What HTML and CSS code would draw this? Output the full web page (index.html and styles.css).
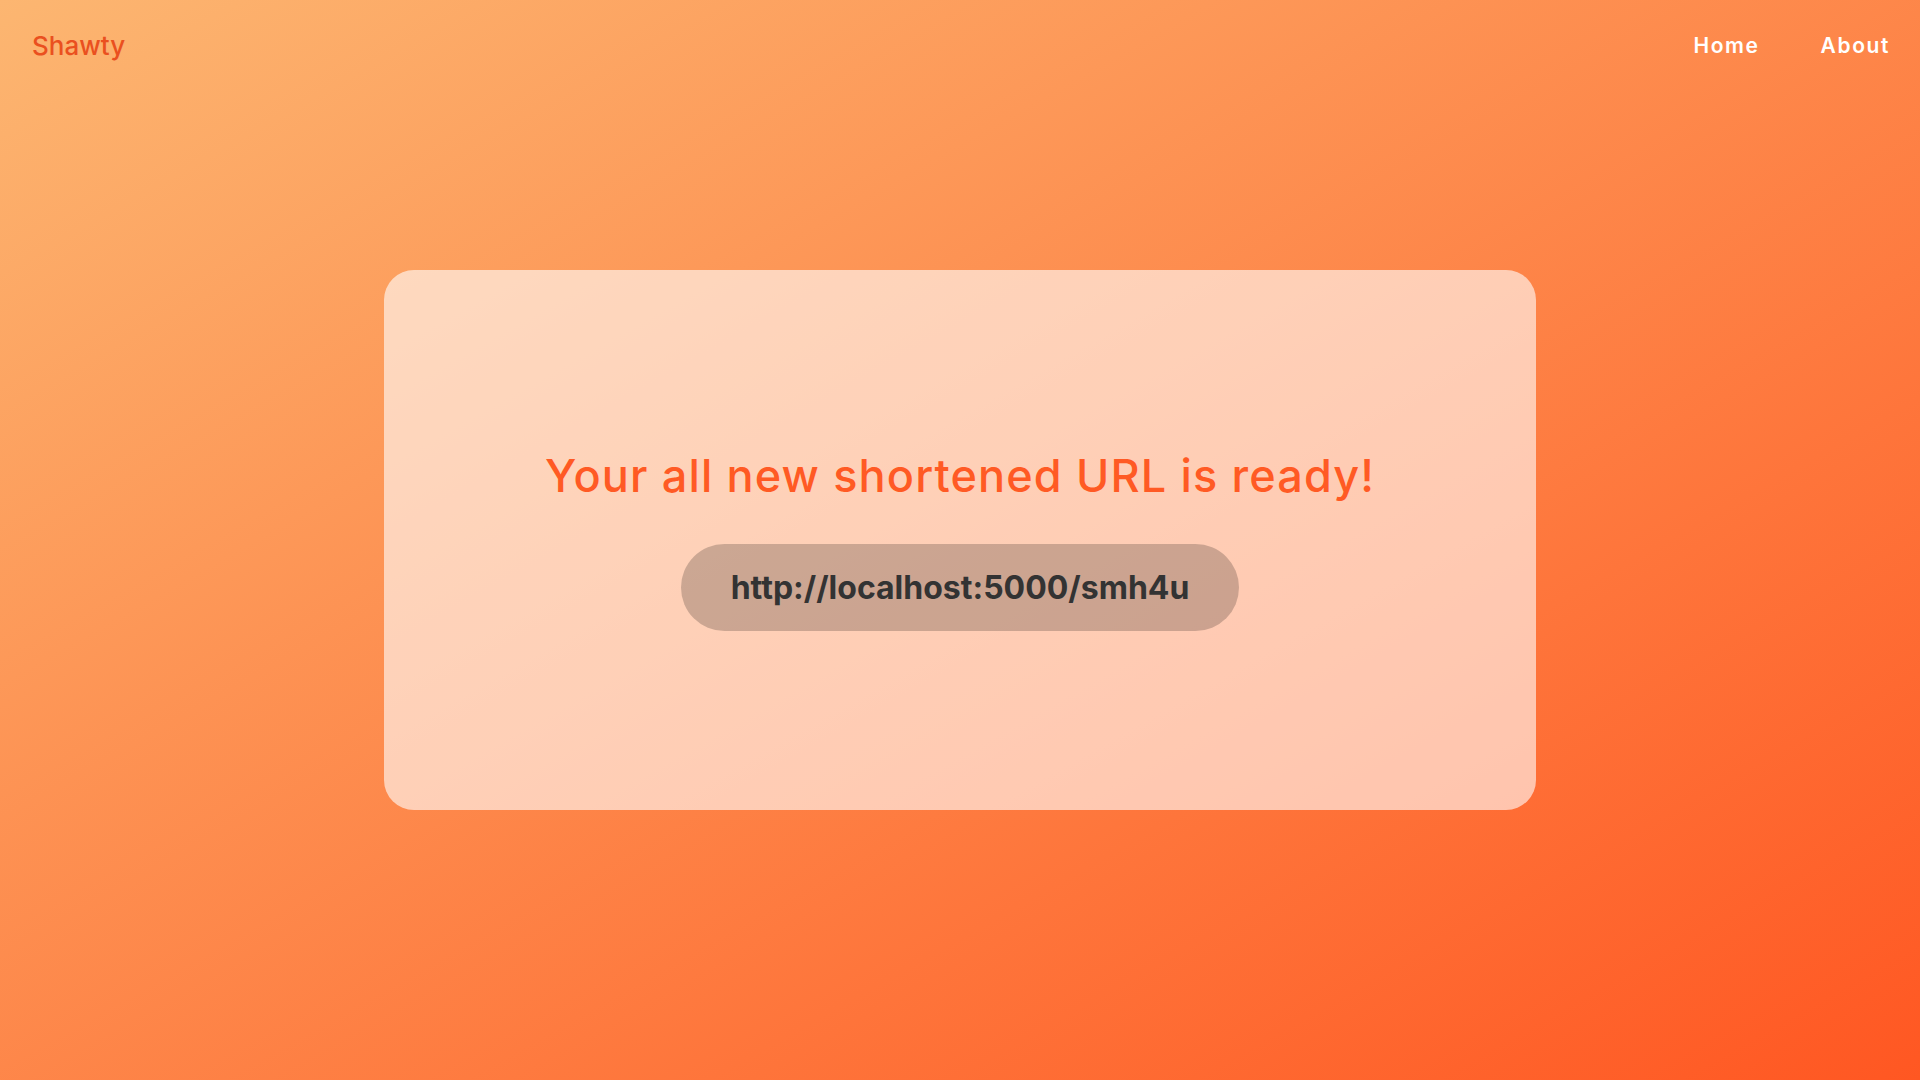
FILE: index.html
```html
<!DOCTYPE html>
<html lang="en">
<head>
<meta charset="utf-8">
<title>Shawty</title>
<link rel="stylesheet" href="styles.css">
</head>
<body>
<div class="page">
  <header class="nav">
    <a class="brand" href="#">Shawty</a>
    <nav class="links">
      <a href="#">Home</a>
      <a href="#">About</a>
    </nav>
  </header>
  <main class="main">
    <section class="card">
      <h1 class="title">Your all new shortened URL is ready!</h1>
      <div class="url">http://localhost:5000/smh4u</div>
    </section>
  </main>
</div>
</body>
</html>
```
FILE: styles.css
```css
* { box-sizing: border-box; }
html, body { margin: 0; padding: 0; }
body {
  font-family: "Inter", "Noto Sans", sans-serif;
  background: linear-gradient(to bottom right, #fcb671, #ff5722);
  min-height: 100vh;
}
.page {
  display: grid;
  grid-template-rows: 100vh;
  grid-template-columns: 100%;
}
.nav {
  grid-area: 1 / 1;
  align-self: start;
  display: flex;
  justify-content: space-between;
  align-items: center;
  padding: 30px 30px 0 32px;
  position: relative;
  z-index: 1;
}
.brand {
  color: #ea501f;
  text-decoration: none;
  font-size: 26px;
  font-weight: 500;
}
.links {
  display: flex;
  gap: 61px;
}
.links a {
  color: #fff;
  text-decoration: none;
  font-size: 21px;
  font-weight: 600;
  letter-spacing: 1.6px;
}
.main {
  grid-area: 1 / 1;
  display: flex;
  align-items: center;
  justify-content: center;
}
.card {
  width: 60vw;
  height: 50vh;
  background: rgba(255, 255, 255, 0.6);
  border-radius: 30px;
  display: flex;
  flex-direction: column;
  align-items: center;
  justify-content: center;
  gap: 41px;
}
.title {
  margin: 0;
  color: #ff5a24;
  font-size: 45px;
  font-weight: 500;
  line-height: 1.2;
  letter-spacing: 1.15px;
}
.url {
  background: rgba(0, 0, 0, 0.2);
  color: #333;
  font-size: 32px;
  font-weight: 700;
  line-height: 39px;
  padding: 24px 50px;
  border-radius: 50px;
}
```
